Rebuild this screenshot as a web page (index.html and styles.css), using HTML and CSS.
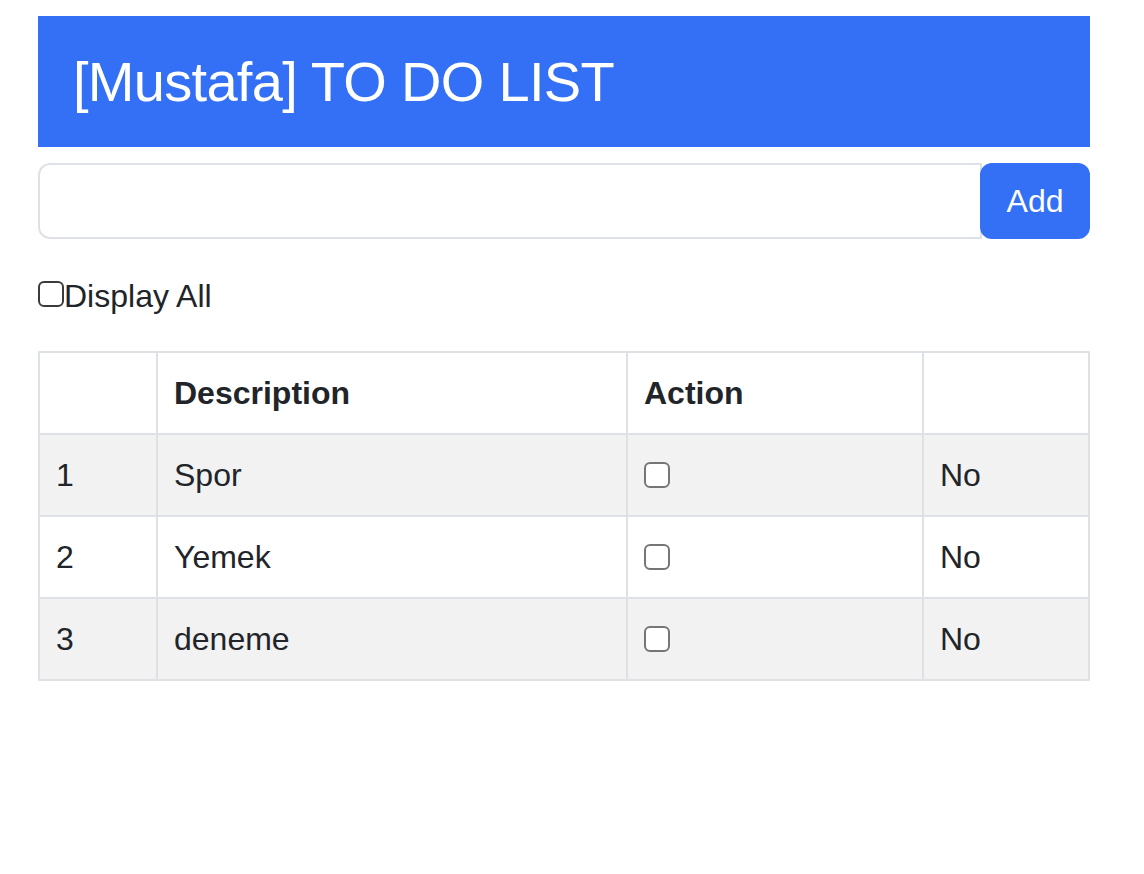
FILE: index.html
```html
<!DOCTYPE html>
<html>
<head>
<meta charset="utf-8">
<link rel="stylesheet" href="styles.css">
</head>
<body>
<div class="page">
  <h3 class="title">[Mustafa] TO DO LIST</h3>
  <div class="input-group">
    <input class="form-control" type="text">
    <button class="btn">Add</button>
  </div>
  <label class="display-all"><input type="checkbox" class="check dark">Display All</label>
  <table class="todo">
    <thead>
      <tr><th class="c1"></th><th class="c2">Description</th><th class="c3">Action</th><th class="c4"></th></tr>
    </thead>
    <tbody>
      <tr class="odd"><td>1</td><td>Spor</td><td><input type="checkbox" class="check"></td><td>No</td></tr>
      <tr><td>2</td><td>Yemek</td><td><input type="checkbox" class="check"></td><td>No</td></tr>
      <tr class="odd"><td>3</td><td>deneme</td><td><input type="checkbox" class="check"></td><td>No</td></tr>
    </tbody>
  </table>
</div>
</body>
</html>
```
FILE: styles.css
```css
html, body { margin: 0; padding: 0; background: #fff; }
body {
  font-family: "Liberation Sans", Arial, sans-serif;
  color: #212529;
  font-size: 32px;
  line-height: 48px;
}
.page {
  margin: 16px 54px 0 38px;
}
.title {
  margin: 0 0 16px 0;
  background: #3470f5;
  color: #fff;
  font-size: 56px;
  font-weight: 400;
  line-height: 67px;
  letter-spacing: -0.7px;
  padding: 32px 35px 32px 35px;
}
.input-group {
  display: flex;
  align-items: stretch;
}
.form-control {
  flex: 1;
  min-width: 0;
  height: 76px;
  box-sizing: border-box;
  border: 2px solid #dee2e6;
  border-radius: 12px 0 0 12px;
  padding: 12px 24px;
  font: inherit;
  outline: none;
  background: #fff;
}
.btn {
  margin-left: -2px;
  width: 110px;
  box-sizing: border-box;
  border: 2px solid #3470f5;
  background: #3470f5;
  color: #fff;
  border-radius: 12px;
  font: inherit;
  padding: 12px 24px;
}
.display-all {
  display: flex;
  align-items: center;
  margin-top: 33px;
  line-height: 48px;
}
.check {
  appearance: none;
  -webkit-appearance: none;
  width: 26px;
  height: 26px;
  margin: 0;
  box-sizing: border-box;
  border: 2px solid #767676;
  border-radius: 6px;
  background: #fff;
  vertical-align: -2px;
}
.check.dark {
  border-color: #3b3b3b;
  margin-top: -4px;
}
.todo {
  margin-top: 31px;
  width: 100%;
  border-collapse: collapse;
  table-layout: fixed;
}
.todo th, .todo td {
  border: 2px solid #dee2e6;
  padding: 16px;
  text-align: left;
  vertical-align: top;
}
.todo th { font-weight: 700; }
.todo .c1 { width: 84px; }
.todo .c2 { width: 436px; }
.todo .c3 { width: 262px; }
.odd td { background: #f2f2f2; }
```
